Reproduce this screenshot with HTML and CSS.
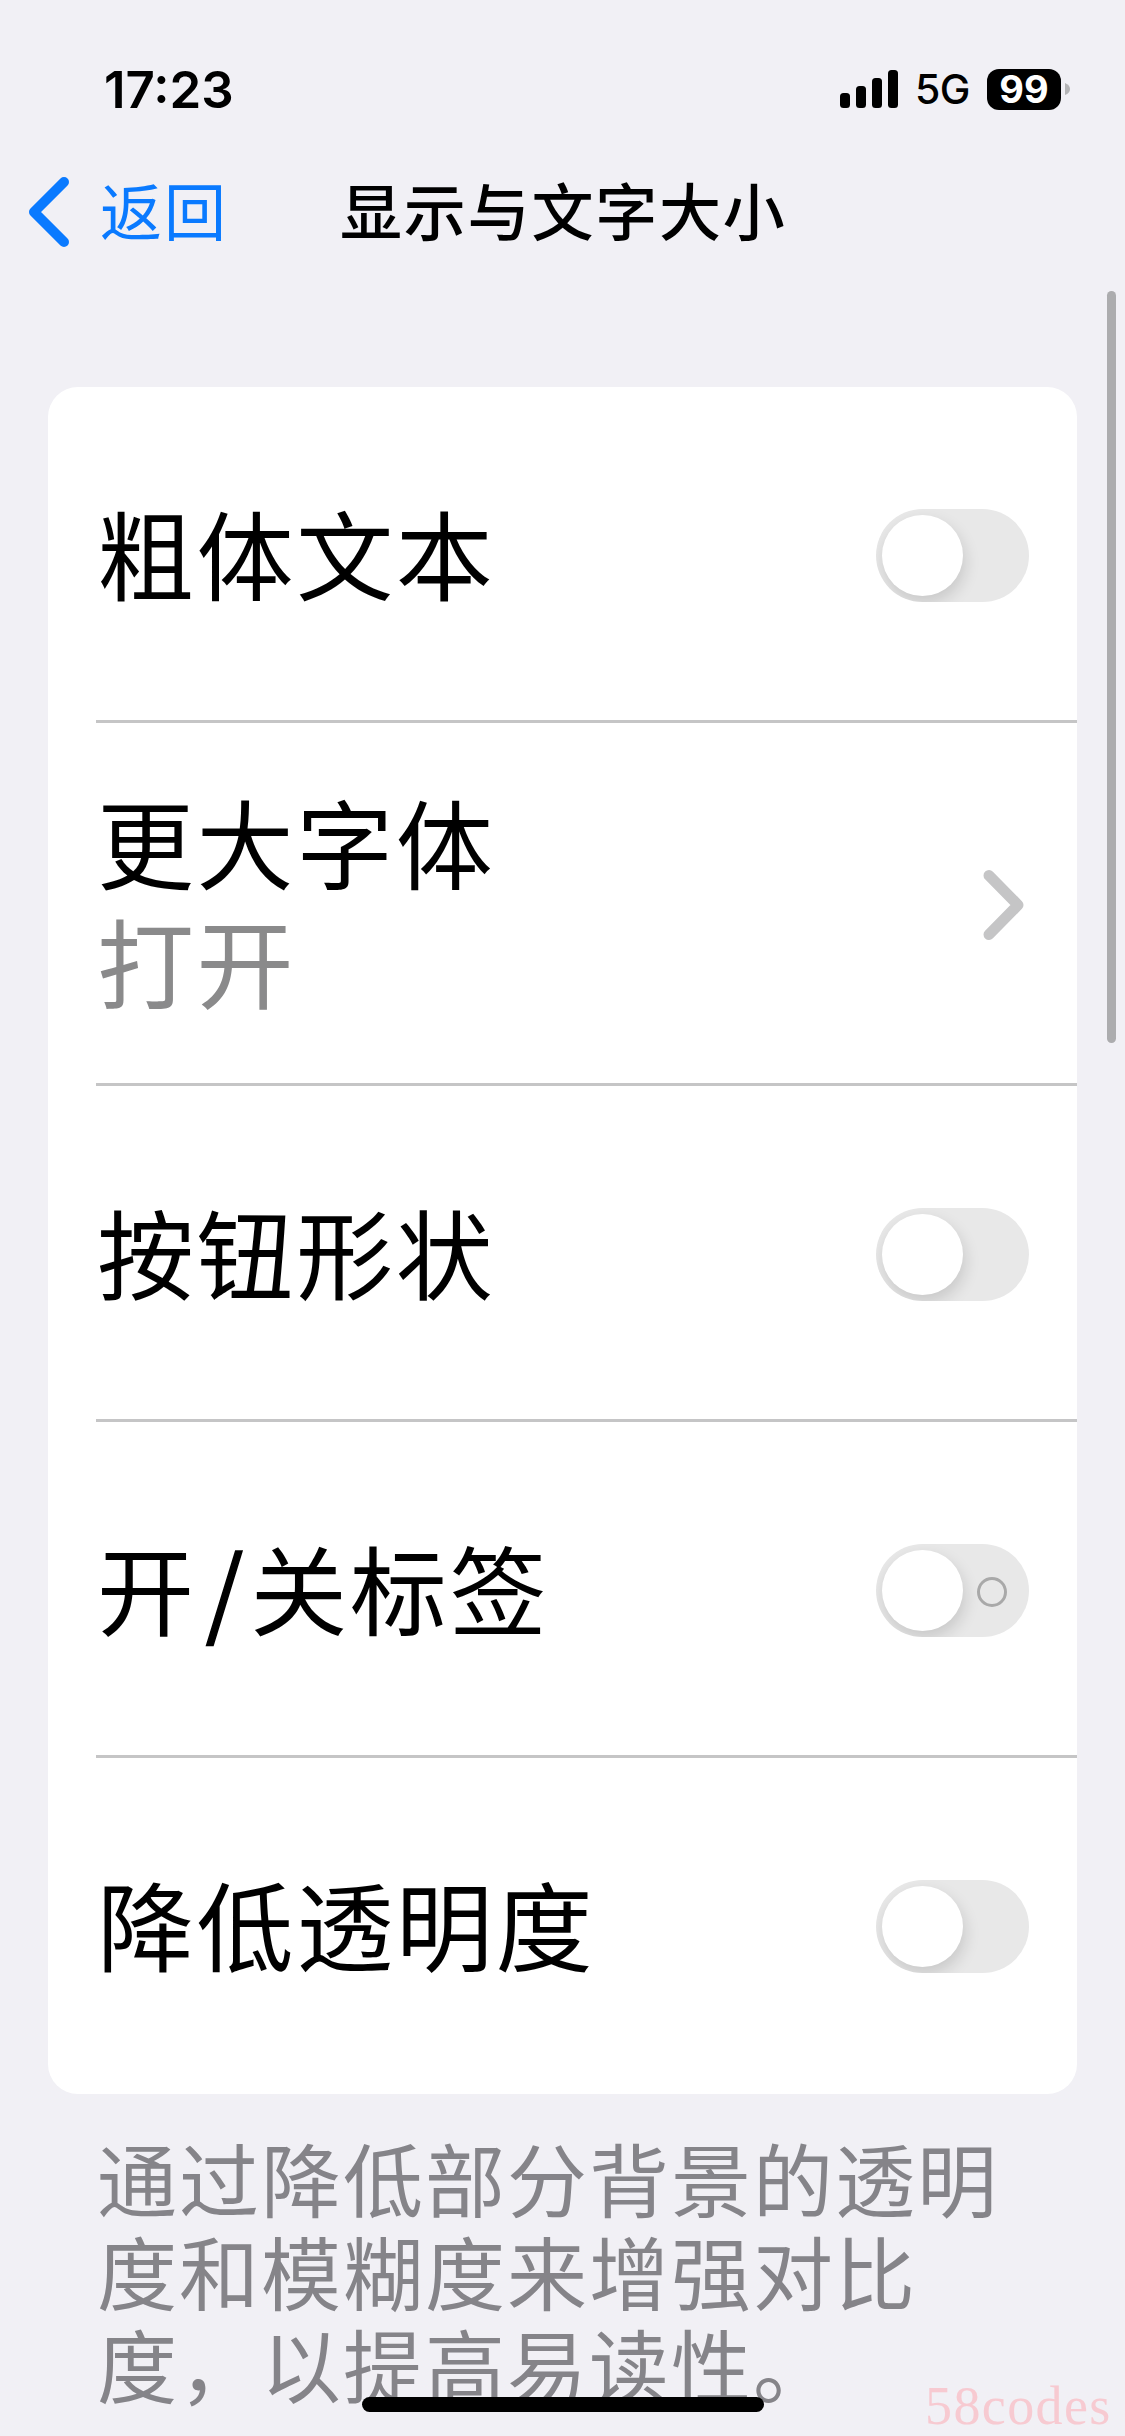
FILE: index.html
```html
<!DOCTYPE html>
<html lang="zh-CN">
<head>
<meta charset="utf-8">
<title>显示与文字大小</title>
<link rel="stylesheet" href="styles.css">
</head>
<body>
<div class="screen">
  <header class="status-bar">
    <span class="time">17:23</span>
    <div class="indicators">
      <svg class="signal" width="58" height="38" viewBox="0 0 58 38">
        <rect x="0" y="23" width="10" height="15" rx="3.5"/>
        <rect x="16" y="16" width="10" height="22" rx="3.5"/>
        <rect x="32" y="8" width="10" height="30" rx="3.5"/>
        <rect x="48" y="0" width="10" height="38" rx="3.5"/>
      </svg>
      <span class="network">5G</span>
      <span class="battery">99</span>
      <svg class="nub" width="5" height="12" viewBox="0 0 5 12"><path d="M0 0Q5 2 5 6T0 12Z"/></svg>
    </div>
  </header>
  <nav class="nav-bar">
    <a class="back">
      <svg width="42" height="72" viewBox="0 0 42 72"><path d="M36 6L6 36L36 66"/></svg>
      <span class="back-text">返回</span>
    </a>
    <h1 class="title">显示与文字大小</h1>
  </nav>
  <main>
    <ul class="card">
      <li class="row"><span class="label">粗体文本</span><span class="toggle"><i class="knob"></i></span></li>
      <li class="row row-link">
        <div class="stack"><span class="label">更大字体</span><span class="label value">打开</span></div>
        <svg class="chevron" width="42" height="72" viewBox="0 0 42 72"><path d="M6 6.5L35 36L6 65.5"/></svg>
      </li>
      <li class="row"><span class="label">按钮形状</span><span class="toggle"><i class="knob"></i></span></li>
      <li class="row"><span class="label">开<span class="slash">/</span>关标签</span><span class="toggle"><i class="knob"></i><i class="ring"></i></span></li>
      <li class="row"><span class="label">降低透明度</span><span class="toggle"><i class="knob"></i></span></li>
    </ul>
    <p class="footnote">通过降低部分背景的透明<br>度和模糊度来增强对比<br>度，以提高易读性。</p>
  </main>
  <div class="scrollbar"></div>
  <div class="home-indicator"></div>
  <div class="watermark">58codes</div>
</div>
</body>
</html>
```

FILE: styles.css
```css
* { box-sizing: border-box; }

body {
  margin: 0;
  background: #f1f0f5;
  color: #000;
  font-family: Inter, "Noto Sans CJK SC", sans-serif;
}

.screen {
  position: relative;
  width: 1125px;
  height: 2436px;
  overflow: hidden;
}

.status-bar {
  display: flex;
  justify-content: space-between;
  align-items: center;
  height: 178px;
  padding: 0 55px 0 104px;
}

.time {
  font-size: 51px;
  font-weight: 600;
  letter-spacing: 0;
}

.indicators { display: flex; align-items: center; }

.network {
  margin-left: 17px;
  font-size: 41px;
  font-weight: 500;
  line-height: 41px;
  letter-spacing: -0.5px;
}

.battery {
  width: 74px;
  height: 41px;
  margin-left: 17px;
  border-radius: 12px;
  background: #000;
  color: #fff;
  font-size: 38px;
  font-weight: 700;
  line-height: 41px;
  text-align: center;
}

.nub { margin-left: 4px; fill: #b4b4b6; }

.nav-bar {
  display: grid;
  grid-template-columns: 340px 446px 1fr;
  grid-template-rows: 68px;
  align-items: center;
  height: 68px;
  margin-bottom: 141px;
  font-family: "Noto Sans CJK SC", sans-serif;
  font-size: 62px;
  line-height: 68px;
}

.back {
  display: flex;
  align-items: center;
  gap: 30px;
  padding-left: 28px;
  color: #0a7aff;
  letter-spacing: 2px;
}

.back svg { fill: none; stroke: #0a7aff; stroke-width: 10; stroke-linecap: round; stroke-linejoin: round; }
.back-text { margin-bottom: 6px; }

.title {
  margin: 0 0 6px;
  font-size: 62px;
  font-weight: 500;
  letter-spacing: 1.8px;
  white-space: nowrap;
}

.card {
  margin: 0 48px;
  padding: 0 0 0 48px;
  border-radius: 30px;
  background: #fff;
  list-style: none;
}

.row {
  display: flex;
  justify-content: space-between;
  align-items: center;
  height: 336px;
  padding-right: 48px;
  box-shadow: inset 0 -3px #c5c5c6;
}

.row:last-child { box-shadow: none; }
.row-link { height: 363px; }
.stack { display: flex; flex-direction: column; margin-bottom: 12px; }

.label {
  margin-bottom: 9px;
  padding-left: 1px;
  font-family: "Noto Sans CJK SC", sans-serif;
  font-size: 97px;
  line-height: 119px;
  letter-spacing: 2.6px;
}

.stack .label { margin-bottom: 0; }
.value { color: #8a8a8b; }
.slash { padding: 0 4px 0 9px; -webkit-text-stroke: 1.5px #000; }

.chevron {
  margin-right: 4px;
  fill: none;
  stroke: #c5c5c6;
  stroke-width: 11;
  stroke-linecap: round;
  stroke-linejoin: round;
}

.toggle {
  display: flex;
  align-items: center;
  width: 153px;
  height: 93px;
  padding: 6px;
  border-radius: 47px;
  background: #e8e8e8;
  overflow: hidden;
}

.knob {
  width: 81px;
  height: 81px;
  border-radius: 50%;
  background: #fff;
  box-shadow: 2px 7px 16px rgba(0, 0, 0, 0.14);
}

.ring {
  width: 30px;
  height: 30px;
  margin: 3px 0 0 14px;
  border: 3px solid #a9a9a9;
  border-radius: 50%;
}

.footnote {
  margin: 36px 0 0 97px;
  color: #858489;
  font-family: "Noto Sans CJK SC", sans-serif;
  font-size: 80px;
  line-height: 93px;
  letter-spacing: 2px;
  white-space: nowrap;
}

.scrollbar {
  position: absolute;
  top: 291px;
  left: 1107px;
  width: 9px;
  height: 752px;
  border-radius: 5px;
  background: #acacae;
}

.home-indicator {
  position: absolute;
  top: 2397px;
  left: 362px;
  width: 402px;
  height: 15px;
  border-radius: 8px;
  background: #000;
}

.watermark {
  position: absolute;
  top: 2376px;
  left: 925px;
  color: #f7cad1;
  font-family: "Liberation Serif", serif;
  font-size: 54px;
  line-height: 60px;
  letter-spacing: 1.4px;
}
```
